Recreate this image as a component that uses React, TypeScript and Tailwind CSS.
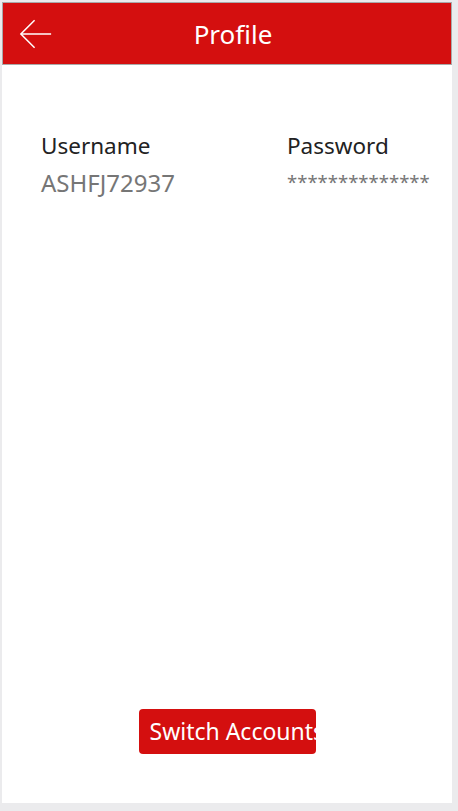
const fields = [
  { label: "Username", value: "ASHFJ72937", valueClass: "text-[24px] leading-[40px]" },
  { label: "Password", value: "**************", valueClass: "text-[18.5px] leading-[38px]" },
];

const App = () => {
  return (
    <div
      className="h-[811px] w-[458px] bg-[#ebebed] pt-[2px] pl-[2px] pr-[6px] pb-[8px] flex"
      style={{ fontFamily: '"Noto Sans", "Open Sans", sans-serif' }}
    >
      <div className="flex-1 flex flex-col bg-white overflow-hidden">
        <header className="h-[63px] flex items-center bg-[#d40f0f] border border-[#a9a9a9]">
          <button className="w-[50px] h-full flex items-center justify-start pl-[16px]">
            <svg width="36" height="32" viewBox="0 0 36 32" fill="none" stroke="white" strokeWidth="1.6">
              <path d="M2 16H34" />
              <path d="M16.5 1.5L2 16L16.5 30.5" />
            </svg>
          </button>
          <h1 className="flex-1 text-center pr-[38px] text-white text-[26px] leading-none">Profile</h1>
        </header>

        <div className="grid grid-cols-[246px_1fr] pl-[39px] pt-[64px]">
          {fields.map((f) => (
            <div key={f.label} className="flex flex-col">
              <span className="text-[22.5px] leading-[34px] text-[#222]">{f.label}</span>
              <span className={`${f.valueClass} text-[#767676] whitespace-nowrap`}>{f.value}</span>
            </div>
          ))}
        </div>

        <div className="mt-auto flex justify-center pb-[49px]">
          <button className="w-[177px] h-[45px] rounded-[4px] bg-[#d40f0f] text-white text-[23px] overflow-hidden whitespace-nowrap text-left pl-[11px]">
            Switch Accounts
          </button>
        </div>
      </div>
    </div>
  );
};

export default App;
